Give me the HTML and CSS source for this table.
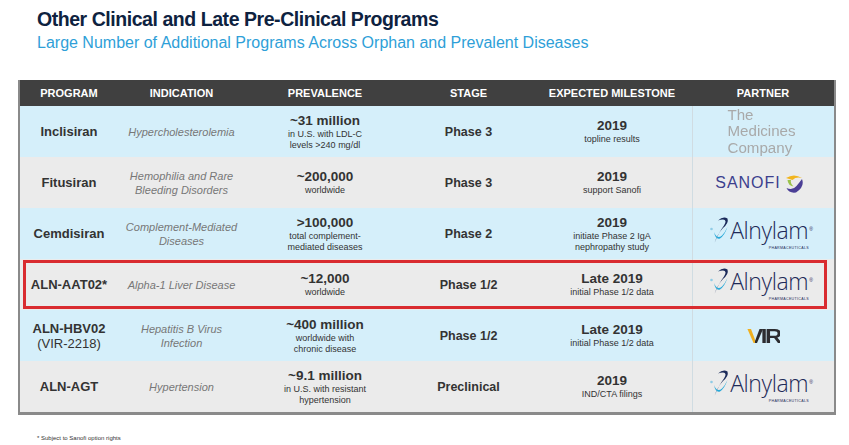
FILE: index.html
```html
<!DOCTYPE html>
<html>
<head>
<meta charset="utf-8">
<link rel="stylesheet" href="styles.css">
</head>
<body>
<header class="titles">
  <h1>Other Clinical and Late Pre-Clinical Programs</h1>
  <h2>Large Number of Additional Programs Across Orphan and Prevalent Diseases</h2>
</header>

<div class="table">
  <div class="row head">
    <div>PROGRAM</div><div>INDICATION</div><div>PREVALENCE</div><div>STAGE</div><div>EXPECTED MILESTONE</div><div>PARTNER</div>
  </div>

  <div class="row blue">
    <div class="prog">Inclisiran</div>
    <div class="ind">Hypercholesterolemia</div>
    <div class="val"><b>~31 million</b><small>in U.S. with LDL-C<br>levels &gt;240 mg/dl</small></div>
    <div class="stage">Phase 3</div>
    <div class="val"><b>2019</b><small>topline results</small></div>
    <div class="partner"><div class="tmc">The<br>Medicines<br>Company</div></div>
  </div>

  <div class="row gray">
    <div class="prog">Fitusiran</div>
    <div class="ind">Hemophilia and Rare<br>Bleeding Disorders</div>
    <div class="val"><b>~200,000</b><small>worldwide</small></div>
    <div class="stage">Phase 3</div>
    <div class="val"><b>2019</b><small>support Sanofi</small></div>
    <div class="partner">
      <div class="sanofi"><span>SANOFI</span>
        <svg width="20" height="20" viewBox="0 0 20 20"><path d="M2 5 Q10 0 18 5 Q12 3.5 8.5 7 Z" fill="#f2b51e"/><path d="M18 6 Q21 14 12 19.5 Q5 20.5 2.5 15 Q9 17.5 12.5 13 Q15 10 18 6 Z" fill="#4b3f96"/><path d="M3.5 7 Q4 12.5 9.5 13.5 Q6 10 7 7 Z" fill="#9bc24a"/></svg>
      </div>
    </div>
  </div>

  <div class="row blue">
    <div class="prog">Cemdisiran</div>
    <div class="ind">Complement-Mediated<br>Diseases</div>
    <div class="val"><b>&gt;100,000</b><small>total complement-<br>mediated diseases</small></div>
    <div class="stage">Phase 2</div>
    <div class="val"><b>2019</b><small>initiate Phase 2 IgA<br>nephropathy study</small></div>
    <div class="partner">
      <div class="alnylam">
        <svg class="swirl" width="20" height="28" viewBox="0 0 20 28"><circle cx="1.5" cy="13" r="1.3" fill="#8fcbe6"/><path d="M8 4.5 Q13 0 17.5 2.5 Q19 7 13 12 Q7.5 18 4.5 27 Q9 16 14 9.5 Q17.5 4 13 3.5 Q10.5 3.5 8 4.5 Z" fill="#1b2a5a"/><path d="M4 16 Q7 24 12 19.5 Q15 16.5 17.5 11 Q14.5 19.5 10 22.5 Q5.5 24 4 16 Z" fill="#2aa9d8"/></svg>
        <div class="aname"><div class="aline"><span class="aword">Alnylam</span><span class="reg">®</span></div><span class="pharma">PHARMACEUTICALS</span></div>
      </div>
    </div>
  </div>

  <div class="row gray hl">
    <div class="prog">ALN-AAT02*</div>
    <div class="ind">Alpha-1 Liver Disease</div>
    <div class="val"><b>~12,000</b><small>worldwide</small></div>
    <div class="stage">Phase 1/2</div>
    <div class="val"><b>Late 2019</b><small>initial Phase 1/2 data</small></div>
    <div class="partner">
      <div class="alnylam">
        <svg class="swirl" width="20" height="28" viewBox="0 0 20 28"><circle cx="1.5" cy="13" r="1.3" fill="#8fcbe6"/><path d="M8 4.5 Q13 0 17.5 2.5 Q19 7 13 12 Q7.5 18 4.5 27 Q9 16 14 9.5 Q17.5 4 13 3.5 Q10.5 3.5 8 4.5 Z" fill="#1b2a5a"/><path d="M4 16 Q7 24 12 19.5 Q15 16.5 17.5 11 Q14.5 19.5 10 22.5 Q5.5 24 4 16 Z" fill="#2aa9d8"/></svg>
        <div class="aname"><div class="aline"><span class="aword">Alnylam</span><span class="reg">®</span></div><span class="pharma">PHARMACEUTICALS</span></div>
      </div>
    </div>
  </div>

  <div class="row blue">
    <div class="prog">ALN-HBV02<br><span class="sub">(VIR-2218)</span></div>
    <div class="ind">Hepatitis B Virus<br>Infection</div>
    <div class="val"><b>~400 million</b><small>worldwide with<br>chronic disease</small></div>
    <div class="stage">Phase 1/2</div>
    <div class="val"><b>Late 2019</b><small>initial Phase 1/2 data</small></div>
    <div class="partner"><div class="vir">VIR</div></div>
  </div>

  <div class="row gray">
    <div class="prog">ALN-AGT</div>
    <div class="ind">Hypertension</div>
    <div class="val"><b>~9.1 million</b><small>in U.S. with resistant<br>hypertension</small></div>
    <div class="stage">Preclinical</div>
    <div class="val"><b>2019</b><small>IND/CTA filings</small></div>
    <div class="partner">
      <div class="alnylam">
        <svg class="swirl" width="20" height="28" viewBox="0 0 20 28"><circle cx="1.5" cy="13" r="1.3" fill="#8fcbe6"/><path d="M8 4.5 Q13 0 17.5 2.5 Q19 7 13 12 Q7.5 18 4.5 27 Q9 16 14 9.5 Q17.5 4 13 3.5 Q10.5 3.5 8 4.5 Z" fill="#1b2a5a"/><path d="M4 16 Q7 24 12 19.5 Q15 16.5 17.5 11 Q14.5 19.5 10 22.5 Q5.5 24 4 16 Z" fill="#2aa9d8"/></svg>
        <div class="aname"><div class="aline"><span class="aword">Alnylam</span><span class="reg">®</span></div><span class="pharma">PHARMACEUTICALS</span></div>
      </div>
    </div>
  </div>
</div>

<p class="foot">* Subject to Sanofi option rights</p>
</body>
</html>
```

FILE: styles.css
```css
* { box-sizing: border-box; }
html, body { margin: 0; padding: 0; background: #fff; }
body { font-family: "Liberation Sans", Arial, sans-serif; color: #333; width: 849px; height: 445px; overflow: hidden; }

.titles { padding: 7px 0 0 37px; height: 80px; }
.titles h1 { margin: 0; font-size: 19.5px; letter-spacing: -0.45px; font-weight: bold; color: #0e2240; line-height: 24px; }
.titles h2 { margin: 2px 0 0; font-size: 16px; font-weight: normal; color: #2f9fd8; line-height: 19px; }

.table { margin-left: 18px; width: 818px; border-left: 2px solid #8a8a8a; border-right: 2px solid #8a8a8a; border-bottom: 3px solid #8a8a8a; }
.row { display: grid; grid-template-columns: 98px 127px 160px 127px 160px 142px; height: 51px; position: relative; }
.row > div { display: flex; flex-direction: column; align-items: center; justify-content: center; text-align: center; }
.row.head { height: 26px; background: #404040; color: #fff; font-size: 11px; font-weight: bold; }
.row.blue { background: #d5effa; }
.row.gray { background: #ebebeb; }
.row .partner { border-left: 1px solid #d0dce2; }

.prog { font-size: 13px; font-weight: bold; color: #333; line-height: 15px; }
.prog .sub { font-weight: normal; }
.ind { font-size: 11px; font-style: italic; color: #777; line-height: 14px; }
.val { line-height: 1; }
.val b { font-size: 13.5px; color: #333; line-height: 15px; }
.val small { font-size: 9px; color: #333; line-height: 11px; margin-top: 1px; }
.stage { font-size: 12.5px; font-weight: bold; color: #333; }

.row.hl::after { content: ""; position: absolute; left: 3px; right: 7px; top: 1px; bottom: 1px; border: 3px solid #d92b2f; pointer-events: none; }

.tmc { font-size: 14px; line-height: 16.2px; color: #a9a9a9; text-align: left; letter-spacing: 0; transform: scaleX(1.08); margin-left: -4px; }

.sanofi { display: flex; align-items: center; gap: 3px; margin-left: -8px; }
.sanofi span { font-size: 16px; letter-spacing: 1px; color: #3c3f8e; }

.alnylam { display: flex; align-items: flex-start; margin-left: -4px; margin-top: 2px; }
.alnylam .swirl { margin-top: -3px; width: 20px; height: 28px; }
.aname { display: flex; flex-direction: column; align-items: flex-end; }
.aline { display: flex; align-items: flex-start; }
.aword { font-family: "Open Sans", "Liberation Sans", sans-serif; font-weight: 300; font-size: 23px; line-height: 22px; color: #1e2a58; letter-spacing: -0.4px; }
.reg { font-size: 5px; line-height: 5px; color: #1e2a58; margin-top: 8px; margin-left: 1px; }
.pharma { font-size: 3.6px; line-height: 4px; color: #1e2a58; letter-spacing: 0.3px; margin-top: 5px; margin-right: 4px; }

.vir { font-size: 24px; line-height: 24px; font-weight: bold; letter-spacing: -2.5px; transform: scaleY(0.85); background: linear-gradient(90deg, #f0b020 0, #f0b020 8px, #2c2c30 8px); -webkit-background-clip: text; background-clip: text; -webkit-text-fill-color: transparent; }

.foot { margin: 20px 0 0 37px; font-size: 6px; color: #333; }
```
